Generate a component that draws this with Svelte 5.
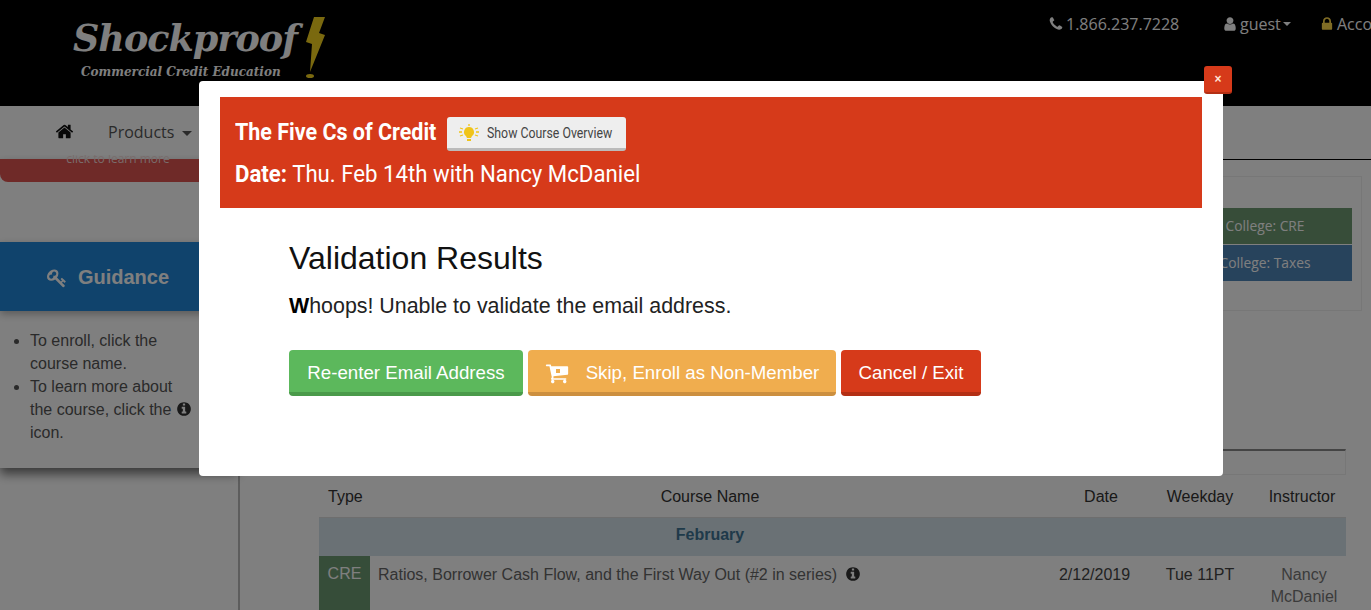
<script>
	const guidance = ['To enroll, click the course name.'];
	const paths = {
		home: 'M1472 992v480q0 26-19 45t-45 19h-384v-384h-256v384h-384q-26 0-45-19t-19-45v-480q0-1 .5-3t.5-3l575-474 575 474q1 2 1 6zm223-69l-62 74q-8 9-21 11h-3q-13 0-21-7l-692-577-692 577q-12 8-24 7-13-2-21-11l-62-74q-8-10-7-23.5t11-21.5l719-599q32-26 76-26t76 26l244 204v-195q0-14 9-23t23-9h192q14 0 23 9t9 23v408l219 182q10 8 11 21.5t-7 23.5z',
		phone: 'M1600 1240q0 27-10 70.5t-21 68.5q-21 50-122 106-94 51-186 51-27 0-53-3.5t-57.5-12.5-47-14.5-55.5-20.5-49-18q-98-35-175-83-127-79-264-216t-216-264q-48-77-83-175-3-9-18-49t-20.5-55.5-14.5-47-12.5-57.5-3.5-53q0-92 51-186 56-101 106-122 25-11 68.5-21t70.5-10q14 0 21 3 18 6 53 76 11 19 30 54t35 63.5 31 53.5q3 4 17.5 25t21.5 35.5 7 28.5q0 20-28.5 50t-62 55-62 53-28.5 46q0 9 5 22.5t8.5 20.5 14 24 11.5 19q76 137 174 235t235 174q2 1 19 11.5t24 14 20.5 8.5 22.5 5q18 0 46-28.5t53-62 55-62 50-28.5q14 0 28.5 7t35.5 21.5 25 17.5q25 15 53.5 31t63.5 35 54 30q70 35 76 53 3 7 3 21z',
		user: 'M1536 1399q0 109-62.5 187t-150.5 78h-854q-88 0-150.5-78t-62.5-187q0-85 8.5-160.5t31.5-152 58.5-131 94-89 134.5-34.5q131 128 313 128t313-128q76 0 134.5 34.5t94 89 58.5 131 31.5 152 8.5 160.5zm-256-887q0 159-112.5 271.5t-271.5 112.5-271.5-112.5-112.5-271.5 112.5-271.5 271.5-112.5 271.5 112.5 112.5 271.5z',
		lock: 'M640 768h512v-192q0-106-75-181t-181-75-181 75-75 181v192zm832 96v576q0 40-28 68t-68 28h-960q-40 0-68-28t-28-68v-576q0-40 28-68t68-28h32v-192q0-184 132-316t316-132 316 132 132 316v192h32q40 0 68 28t28 68z',
		info: 'M1152 1376v-160q0-14-9-23t-23-9h-96v-512q0-14-9-23t-23-9h-320q-14 0-23 9t-9 23v160q0 14 9 23t23 9h96v320h-96q-14 0-23 9t-9 23v160q0 14 9 23t23 9h448q14 0 23-9t9-23zm-128-896v-160q0-14-9-23t-23-9h-192q-14 0-23 9t-9 23v160q0 14 9 23t23 9h192q14 0 23-9t9-23zm640 416q0 209-103 385.5t-279.5 279.5-385.5 103-385.5-103-279.5-279.5-103-385.5 103-385.5 279.5-279.5 385.5-103 385.5 103 279.5 279.5 103 385.5z',
		cart: 'M704 1536q0 52-38 90t-90 38-90-38-38-90 38-90 90-38 90 38 38 90zm896 0q0 52-38 90t-90 38-90-38-38-90 38-90 90-38 90 38 38 90zm128-1088v512q0 24-16.5 42.5t-40.5 21.5l-1044 122q13 60 13 70 0 16-24 64h920q26 0 45 19t19 45-19 45-45 19h-1024q-26 0-45-19t-19-45q0-11 8-31.5t16-36 21.5-40 15.5-29.5l-177-823h-204q-26 0-45-19t-19-45 19-45 45-19h256q16 0 28.5 6.5t19.5 15.5 13 24.5 8 26 5.5 29.5 4.5 26h1201q26 0 45 19t19 45z',
		key: 'M832 512q0-80-56-136t-136-56-136 56-56 136q0 42 19 83-41-19-83-19-80 0-136 56t-56 136 56 136 136 56 136-56 56-136q0-42-19-83 41 19 83 19 80 0 136-56t56-136zm851 704q0 17-49 66t-66 49q-9 0-28.5-16t-36.5-33-38.5-40-24.5-26l-96 96 220 220q28 28 28 68 0 42-39 81t-81 39q-40 0-68-28l-671-671q-176 131-365 131-163 0-265.5-102.5t-102.5-265.5q0-160 95-313t248-248 313-95q163 0 265.5 102.5t102.5 265.5q0 189-131 365l355 355 96-96q-3-3-26-24.5t-40-38.5-33-36.5-16-28.5q0-17 49-66t66-49q13 0 23 10 6 6 46 44.5t82 79.5 86.5 86 73 78 28.5 41z'
	};
</script>

{#snippet icon(name, size, cls = '')}
	<svg class={cls} width={size} height={size} viewBox="0 0 1792 1792" fill="currentColor"><path d={paths[name]} /></svg>
{/snippet}

<div class="page">
	<header class="top">
		<div class="logo">
			<div class="logo-text">
				<div class="logo-name">Shockproof</div>
				<div class="logo-sub">Commercial Credit Education</div>
			</div>
			<svg class="bolt" width="22" height="64" viewBox="0 0 22 64">
				<polygon points="9,0 20,0 14,16 20,18 5,55 7,27 1,25" fill="#f5d21f" />
				<ellipse cx="5" cy="59" rx="4" ry="2" fill="#f5d21f" />
			</svg>
		</div>
		<div class="links">
			<span class="link phone">{@render icon('phone', 16)}1.866.237.7228</span>
			<span class="link guest">{@render icon('user', 16)}guest<i class="caret small"></i></span>
			<span class="link account"><span class="gold">{@render icon('lock', 16)}</span>Account</span>
		</div>
	</header>

	<nav class="nav">
		{@render icon('home', 19, 'home')}
		<span class="nav-item">Products<i class="caret"></i></span>
	</nav>

	<div class="content">
		<aside class="side">
			<div class="side-panel">
				<div class="alert"><span>click to learn more</span></div>
				<h3 class="guidance">{@render icon('key', 20)}Guidance</h3>
				<ul>
					{#each guidance as item}
						<li>{item}</li>
					{/each}
					<li>To learn more about the course, click the {@render icon('info', 16, 'inline')} icon.</li>
				</ul>
			</div>
		</aside>

		<main class="main">
			<section class="colleges">
				<div class="college cre">College: CRE</div>
				<div class="college taxes">College: Taxes</div>
			</section>

			<div class="search"></div>

			<table>
				<colgroup>
					<col style="width:51px" />
					<col style="width:680px" />
					<col style="width:102px" />
					<col style="width:96px" />
					<col style="width:98px" />
				</colgroup>
				<thead>
					<tr>
						<th class="type-h">Type</th>
						<th>Course Name</th>
						<th>Date</th>
						<th>Weekday</th>
						<th class="instr">Instructor</th>
					</tr>
				</thead>
				<tbody>
					<tr class="month"><td></td><td>February</td><td colspan="3"></td></tr>
					<tr>
						<td class="type">CRE</td>
						<td class="course">Ratios, Borrower Cash Flow, and the First Way Out (#2 in series) {@render icon('info', 16, 'inline')}</td>
						<td class="mid date-cell">2/12/2019</td>
						<td class="mid">Tue 11PT</td>
						<td class="mid who">Nancy McDaniel</td>
					</tr>
				</tbody>
			</table>
		</main>
	</div>

	<div class="overlay">
		<div class="modal">
			<button class="close">×</button>
			<div class="banner">
				<div class="banner-row">
					<span class="squeeze title">The Five Cs of Credit</span>
					<button class="overview">
						<svg width="20" height="18" viewBox="0 0 20 18">
							<path d="M10 3a5 5 0 0 0-3 9l1 2h4l1-2a5 5 0 0 0-3-9z" fill="#f0c419" />
							<rect x="8" y="15" width="4" height="2" fill="#f0c419" />
							<path d="M1 4l3 1M0 8h3M1 12l3-1M19 4l-3 1M20 8h-3M19 12l-3-1M10 0v2" stroke="#f0c419" stroke-width="1.3" />
						</svg>
						<span class="squeeze over-text">Show Course Overview</span>
					</button>
				</div>
				<div class="squeeze date"><b>Date:</b> Thu. Feb 14th with Nancy McDaniel</div>
			</div>
			<div class="results">
				<h2>Validation Results</h2>
				<p><b>W</b>hoops! Unable to validate the email address.</p>
				<div class="actions">
					<button class="btn green">Re-enter Email Address</button>
					<button class="btn orange">
						<span class="cart">{@render icon('cart', 24)}<i></i></span>
						Skip, Enroll as Non-Member
					</button>
					<button class="btn red">Cancel / Exit</button>
				</div>
			</div>
		</div>
	</div>
</div>

<style>
	:global(body) {
		margin: 0;
		background: #fff;
	}

	.page {
		position: relative;
		width: 1371px;
		height: 610px;
		overflow: hidden;
		font-family: 'Liberation Sans', Arial, sans-serif;
		color: #444;
	}

	/* header */
	.top {
		display: flex;
		height: 106px;
		background: #000;
		color: #fff;
		padding-left: 73px;
		box-sizing: border-box;
	}

	.logo {
		flex: 0 0 975px;
		display: flex;
		align-items: flex-start;
	}

	.logo-text {
		padding-top: 15px;
		width: 232px;
		font-family: 'DejaVu Serif', serif;
		font-weight: bold;
		font-style: italic;
		white-space: nowrap;
	}

	.logo-name {
		font-size: 36.5px;
		line-height: 48px;
		letter-spacing: -1px;
	}

	.logo-sub {
		font-size: 12px;
		line-height: 16px;
		margin: 1px 0 0 8px;
	}

	.bolt {
		margin-top: 17px;
	}

	.links {
		display: flex;
		align-items: flex-start;
		padding-top: 12px;
		font-family: 'Open Sans', sans-serif;
		font-size: 16px;
		line-height: 24px;
		white-space: nowrap;
	}

	.link {
		display: inline-flex;
		align-items: center;
		gap: 2px;
	}

	.phone {
		width: 174px;
	}

	.guest {
		width: 97px;
	}

	.gold {
		display: inline-flex;
		color: #ffd84a;
	}

	.caret {
		display: inline-block;
		margin-left: 8px;
		vertical-align: 2px;
		border-top: 5px solid currentColor;
		border-left: 5px solid transparent;
		border-right: 5px solid transparent;
	}

	.caret.small {
		margin-left: 0;
		border-top-width: 4px;
		border-left-width: 4px;
		border-right-width: 4px;
	}

	/* nav */
	.nav {
		position: relative;
		z-index: 2;
		display: flex;
		align-items: center;
		height: 49px;
		padding: 2px 0 0 55px;
		box-sizing: border-box;
		background: #fff;
		font-family: 'Open Sans', sans-serif;
		font-size: 16px;
		color: #555;
	}

	.nav :global(.home) {
		color: #111;
	}

	.nav-item {
		margin-left: 34px;
	}

	/* page body */
	.content {
		display: flex;
		height: 455px;
	}

	.side {
		flex: 0 0 238px;
		border-right: 2px solid #bbb;
	}

	.side-panel {
		height: 309px;
		box-shadow: 0 6px 10px rgba(0, 0, 0, 0.55);
	}

	.alert {
		margin-top: 4px;
		height: 23px;
		background: #de5450;
		border-radius: 0 0 8px 8px;
		color: #f3d9d8;
		text-align: center;
		font-family: 'Open Sans', sans-serif;
		font-size: 12px;
		line-height: 10px;
		box-sizing: border-box;
		padding-right: 2px;
	}

	.alert span {
		position: relative;
		top: -5px;
	}

	.guidance {
		display: flex;
		align-items: center;
		justify-content: center;
		gap: 11px;
		height: 69px;
		margin: 60px 0 0;
		padding: 2px 22px 0 0;
		box-sizing: border-box;
		background: #2086d8;
		color: #fff;
		font-size: 20px;
		font-weight: bold;
		box-shadow: 0 3px 8px rgba(0, 0, 0, 0.3);
	}

	ul {
		margin: 18px 0 0;
		padding: 0 43px 0 30px;
		font-size: 16px;
		line-height: 23px;
		color: #555;
	}

	ul :global(.inline),
	.course :global(.inline) {
		vertical-align: -2px;
		color: #333;
	}

	.course :global(.inline) {
		margin-left: 3px;
	}

	.main {
		flex: 1;
		min-width: 0;
		margin-top: 4px;
		border-top: 1px solid #000;
		padding: 0 25px 0 79px;
	}

	.colleges {
		width: 380px;
		height: 135px;
		margin: 16px -16px 0 auto;
		padding: 31px 9px 0 0;
		box-sizing: border-box;
		border: 1px solid #eee;
		display: flex;
		flex-direction: column;
		align-items: flex-end;
		gap: 1px;
	}

	.college {
		width: 174px;
		height: 36px;
		line-height: 36px;
		text-align: center;
		font-family: 'Open Sans', sans-serif;
		font-size: 13.8px;
		color: #fff;
	}

	.cre {
		background: #6f9a72;
	}

	.taxes {
		background: #4f86b8;
	}

	.search {
		width: 126px;
		height: 23px;
		margin: 138px 0 0 auto;
		border: 1px solid #eee;
		border-top: 2px solid #888;
	}

	table {
		width: 1027px;
		table-layout: fixed;
		border-collapse: collapse;
		font-size: 16px;
	}

	th {
		height: 41px;
		padding: 1px 0 0;
		font-weight: normal;
		color: #333;
		text-align: center;
		vertical-align: middle;
	}

	th.type-h {
		text-align: left;
		padding-left: 9px;
		white-space: nowrap;
	}

	th.instr {
		padding-left: 10px;
	}

	.month td {
		height: 38px;
		padding: 0 0 3px;
		box-sizing: border-box;
		background: #d4e2ea;
		text-align: center;
		vertical-align: middle;
		font-weight: bold;
		color: #3f7494;
		border-top: 1px solid #ddd;
	}

	td {
		vertical-align: top;
	}

	.type {
		background: #6c9a72;
		color: #fff;
		text-align: center;
		padding: 9px 0 0;
		height: 54px;
		box-sizing: border-box;
	}

	.course {
		padding: 10px 0 0 8px;
		color: #666;
		white-space: nowrap;
	}

	.mid {
		padding: 10px 0 0;
		text-align: center;
		color: #444;
	}

	.date-cell {
		padding-right: 13px;
	}

	.who {
		padding: 8px 0 0 14px;
		line-height: 22px;
		color: #777;
	}

	/* modal */
	.overlay {
		position: absolute;
		inset: 0;
		z-index: 5;
		background: rgba(0, 0, 0, 0.5);
		padding: 81px 0 0 199px;
		box-sizing: border-box;
	}

	.modal {
		position: relative;
		width: 1024px;
		height: 395px;
		background: #fff;
		border-radius: 4px;
		padding: 16px 21px;
		box-sizing: border-box;
	}

	.close {
		position: absolute;
		top: -15px;
		right: -9px;
		width: 28px;
		height: 28px;
		padding: 0;
		border: 0;
		border-bottom: 2px solid #b32f14;
		border-radius: 3px;
		background: #d63a1a;
		color: #ffe3d5;
		font-family: 'Liberation Sans', sans-serif;
		font-size: 12px;
		font-weight: bold;
	}

	.banner {
		height: 111px;
		background: #d63a1a;
		color: #fff;
		padding: 20px 0 0 15px;
		box-sizing: border-box;
		font-family: Roboto, sans-serif;
	}

	.banner-row {
		display: flex;
		align-items: flex-start;
		height: 34px;
	}

	.squeeze {
		display: inline-block;
		transform-origin: left center;
		white-space: nowrap;
	}

	.title {
		flex: 0 0 212px;
		min-width: 0;
		font-size: 24px;
		line-height: 30px;
		font-weight: bold;
		transform: scaleX(0.895);
	}

	.overview {
		display: flex;
		align-items: center;
		width: 179px;
		height: 34px;
		padding: 0 0 0 12px;
		border: 0;
		border-bottom: 3px solid #bbb;
		border-radius: 3px;
		background: #eee;
		color: #444;
		font-family: Roboto, sans-serif;
	}

	.overview svg {
		flex: none;
	}

	.over-text {
		flex: 0 0 120px;
		min-width: 0;
		margin-left: 8px;
		font-size: 14px;
		transform: scaleX(0.88);
	}

	.date {
		margin-top: 7px;
		font-size: 24px;
		line-height: 32px;
		transform: scaleX(0.925);
	}

	.results {
		padding-left: 69px;
	}

	h2 {
		margin: 31px 0 0;
		font-size: 32px;
		line-height: 38px;
		font-weight: normal;
		color: #111;
	}

	p {
		margin: 16px 0 0;
		font-size: 21.4px;
		line-height: 26px;
		color: #222;
	}

	p b {
		color: #000;
	}

	.actions {
		display: flex;
		gap: 5px;
		margin-top: 31px;
	}

	.btn {
		display: flex;
		align-items: center;
		justify-content: center;
		height: 46px;
		padding: 3px 0 0;
		border: 0;
		border-bottom: 4px solid;
		border-radius: 4px;
		color: #fff;
		font-family: 'Liberation Sans', sans-serif;
		font-size: 18.7px;
		box-sizing: border-box;
	}

	.green {
		width: 234px;
		background: #5cb85c;
		border-color: #4a9a4a;
	}

	.orange {
		width: 308px;
		background: #f0ad4e;
		border-color: #cc8f3f;
	}

	.red {
		width: 140px;
		background: #d63a1a;
		border-color: #b32f14;
	}

	.cart {
		position: relative;
		display: inline-flex;
		margin-right: 17px;
	}

	.cart i {
		position: absolute;
		left: 11px;
		top: 8px;
		width: 4px;
		height: 4px;
		background: #f0ad4e;
	}
</style>
